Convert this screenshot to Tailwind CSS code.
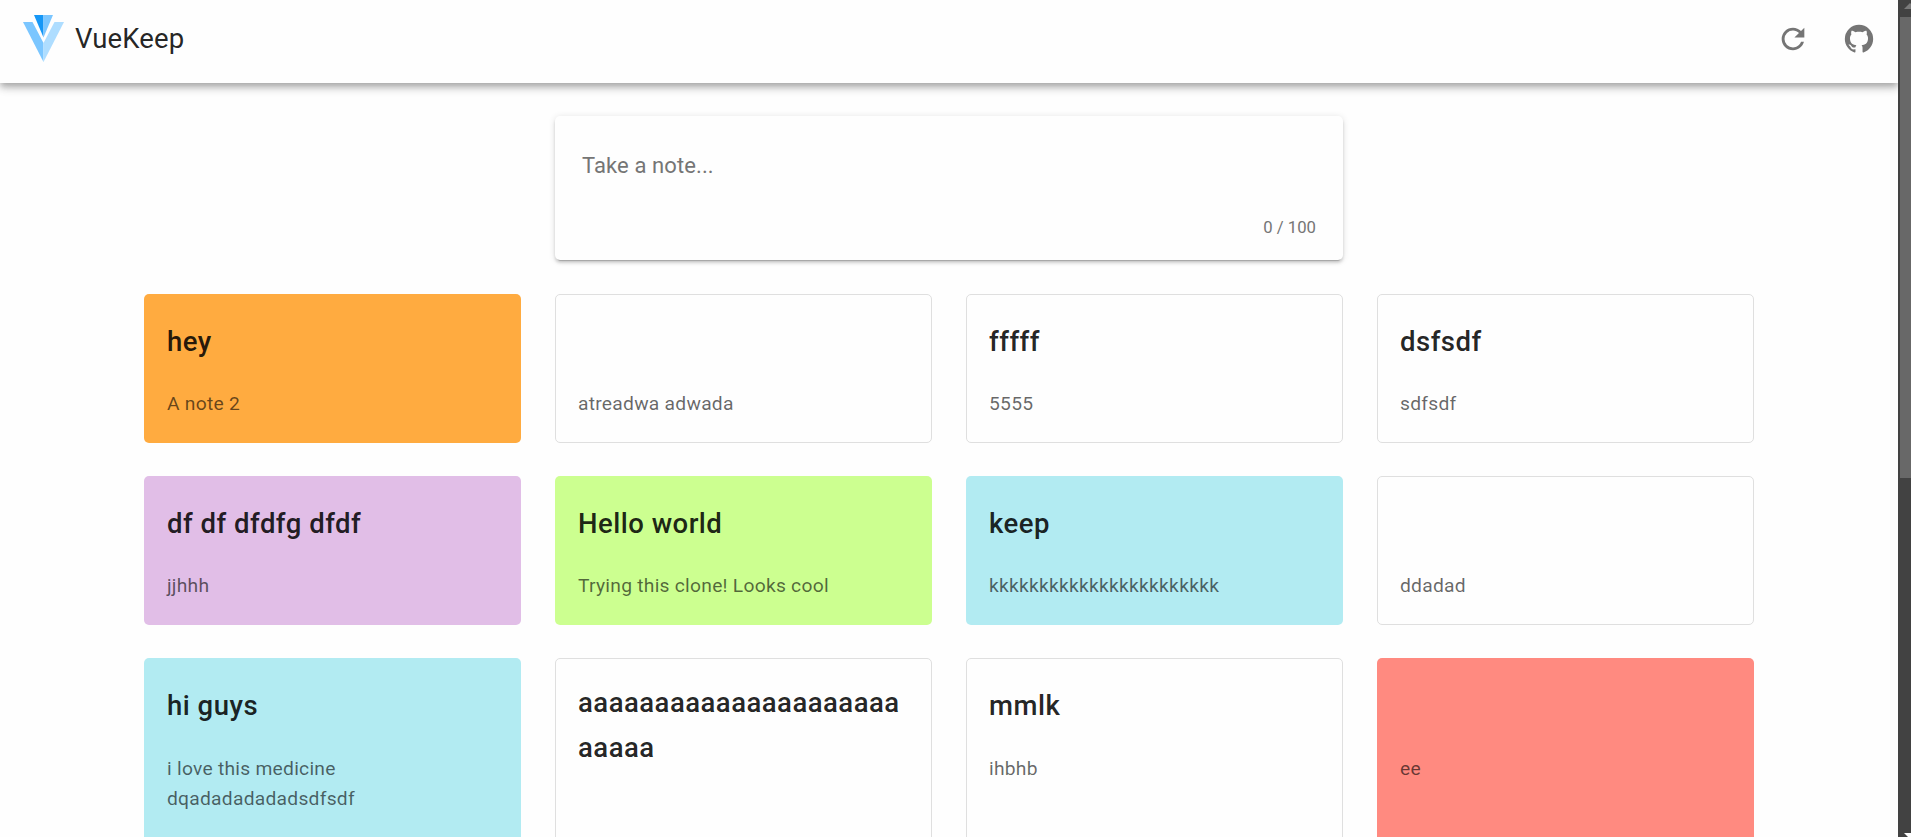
<!DOCTYPE html>
<html lang="en">
<head>
<meta charset="utf-8">
<title>VueKeep</title>
<script src="https://cdn.jsdelivr.net/npm/@tailwindcss/browser@4"></script>
</head>
<body class="flex h-[837px] w-[1911px] overflow-hidden bg-[#fefefe] font-['Roboto',sans-serif] text-black/87">
<div class="min-w-0 flex-1 overflow-hidden">
  <header class="flex h-[83px] items-start justify-between bg-[#fefefe] shadow-[0_3px_6px_-1px_rgba(0,0,0,0.2),0_6px_7px_0_rgba(0,0,0,0.14),0_1px_14px_0_rgba(0,0,0,0.12)]">
    <div class="flex h-[77px] items-center pl-[23px]">
      <svg class="h-[47px] w-[41px]" viewBox="0 0 41 47">
        <path fill="#1697f6" d="M11 0H20.5V22.5Z"/><path fill="#7bc6ff" d="M20.5 0H30L20.5 22.5Z"/>
        <path fill="#7bc6ff" d="M0 7H9.5L20.5 28V47Z"/><path fill="#aeddff" d="M41 7H31.5L20.5 28V47Z"/>
      </svg>
      <h1 class="pl-[11px] text-[27.5px] leading-[41px] tracking-[0.12px]">VueKeep</h1>
    </div>
    <div class="flex h-[77px] items-center gap-[32px] pr-[22px] text-[#757575]">
      <svg class="size-[34px]" viewBox="0 0 24 24" fill="currentColor"><path d="M17.65,6.35C16.2,4.9 14.21,4 12,4A8,8 0 0,0 4,12A8,8 0 0,0 12,20C15.73,20 18.84,17.45 19.73,14H17.65C16.83,16.33 14.61,18 12,18A6,6 0 0,1 6,12A6,6 0 0,1 12,6C13.66,6 15.14,6.69 16.22,7.78L13,11H20V4L17.65,6.35Z"/></svg>
      <svg class="size-[34px]" viewBox="0 0 24 24" fill="currentColor"><path d="M12,2A10,10 0 0,0 2,12C2,16.42 4.87,20.17 8.84,21.5C9.34,21.58 9.5,21.27 9.5,21C9.5,20.77 9.5,20.14 9.5,19.31C6.73,19.91 6.14,17.97 6.14,17.97C5.68,16.81 5.03,16.5 5.03,16.5C4.12,15.88 5.1,15.9 5.1,15.9C6.1,15.97 6.63,16.93 6.63,16.93C7.5,18.45 8.97,18 9.54,17.76C9.63,17.11 9.89,16.67 10.17,16.42C7.95,16.17 5.62,15.31 5.62,11.5C5.62,10.39 6,9.5 6.65,8.79C6.55,8.54 6.2,7.5 6.75,6.15C6.75,6.15 7.59,5.88 9.5,7.17C10.29,6.95 11.15,6.84 12,6.84C12.85,6.84 13.71,6.95 14.5,7.17C16.41,5.88 17.25,6.15 17.25,6.15C17.8,7.5 17.45,8.54 17.35,8.79C18,9.5 18.38,10.39 18.38,11.5C18.38,15.32 16.04,16.16 13.81,16.41C14.17,16.72 14.5,17.33 14.5,18.26C14.5,19.6 14.5,20.68 14.5,21C14.5,21.27 14.66,21.59 15.17,21.5C19.14,20.16 22,16.42 22,12A10,10 0 0,0 12,2Z"/></svg>
    </div>
  </header>
  <main class="px-[144px] pt-[33px]">
    <section class="mx-auto flex h-[144px] w-[788px] flex-col justify-between rounded-[5px] bg-[#fefefe] px-[27px] pt-[33px] pb-[21px] text-[#757575] shadow-[0_4px_1px_-3px_rgba(0,0,0,0.2),0_3px_3px_0_rgba(0,0,0,0.14),0_1px_7px_0_rgba(0,0,0,0.12)]">
      <p class="text-[22px] leading-[33px] tracking-[0.1px]">Take a note...</p>
      <p class="text-right text-[16.7px] leading-[22px]">0 / 100</p>
    </section>
    <section class="mt-[34px] grid grid-cols-4 gap-x-[34px] gap-y-[33px] text-[27.5px] leading-[45px] font-medium tracking-[0.49px]">
      <article class="h-[149px] rounded-[5px] bg-[#ffab40] px-[23px] pt-[25px]"><h2 class="h-[45px]">hey</h2><p class="pt-[25px] text-[19.25px] leading-[30px] font-normal tracking-[0.25px] text-black/60">A note 2</p></article>
      <article class="h-[149px] rounded-[5px] border border-[#dfdfdf] px-[22px] pt-[24px]"><h2 class="h-[45px]"></h2><p class="pt-[25px] text-[19.25px] leading-[30px] font-normal tracking-[0.25px] text-black/60">atreadwa adwada</p></article>
      <article class="h-[149px] rounded-[5px] border border-[#dfdfdf] px-[22px] pt-[24px]"><h2 class="h-[45px]">fffff</h2><p class="pt-[25px] text-[19.25px] leading-[30px] font-normal tracking-[0.25px] text-black/60">5555</p></article>
      <article class="h-[149px] rounded-[5px] border border-[#dfdfdf] px-[22px] pt-[24px]"><h2 class="h-[45px]">dsfsdf</h2><p class="pt-[25px] text-[19.25px] leading-[30px] font-normal tracking-[0.25px] text-black/60">sdfsdf</p></article>
      <article class="h-[149px] rounded-[5px] bg-[#e1bee7] px-[23px] pt-[25px]"><h2 class="h-[45px]">df df dfdfg dfdf</h2><p class="pt-[25px] text-[19.25px] leading-[30px] font-normal tracking-[0.25px] text-black/60">jjhhh</p></article>
      <article class="h-[149px] rounded-[5px] bg-[#ccff90] px-[23px] pt-[25px]"><h2 class="h-[45px]">Hello world</h2><p class="pt-[25px] text-[19.25px] leading-[30px] font-normal tracking-[0.25px] text-black/60">Trying this clone! Looks cool</p></article>
      <article class="h-[149px] rounded-[5px] bg-[#b2ebf2] px-[23px] pt-[25px]"><h2 class="h-[45px]">keep</h2><p class="pt-[25px] text-[19.25px] leading-[30px] font-normal tracking-[0.25px] text-black/60">kkkkkkkkkkkkkkkkkkkkkkk</p></article>
      <article class="h-[149px] rounded-[5px] border border-[#dfdfdf] px-[22px] pt-[24px]"><h2 class="h-[45px]"></h2><p class="pt-[25px] text-[19.25px] leading-[30px] font-normal tracking-[0.25px] text-black/60">ddadad</p></article>
      <article class="h-[240px] rounded-[5px] bg-[#b2ebf2] px-[23px] pt-[25px]"><h2 class="h-[45px]">hi guys</h2><p class="pt-[26px] text-[19.25px] leading-[30px] font-normal tracking-[0.25px] text-black/60">i love this medicine<br>dqadadadadadsdfsdf</p></article>
      <article class="h-[240px] rounded-[5px] border border-[#dfdfdf] px-[22px] pt-[21px]"><h2>aaaaaaaaaaaaaaaaaaaaa<br>aaaaa</h2></article>
      <article class="h-[240px] rounded-[5px] border border-[#dfdfdf] px-[22px] pt-[24px]"><h2 class="h-[45px]">mmlk</h2><p class="pt-[26px] text-[19.25px] leading-[30px] font-normal tracking-[0.25px] text-black/60">ihbhb</p></article>
      <article class="h-[240px] rounded-[5px] bg-[#ff8a80] px-[23px] pt-[25px]"><h2 class="h-[45px]"></h2><p class="pt-[26px] text-[19.25px] leading-[30px] font-normal tracking-[0.25px] text-black/60">ee</p></article>
    </section>
  </main>
</div>
<aside class="flex w-[13px] shrink-0 flex-col items-end bg-[#424242]">
  <svg class="h-[17px] w-[11px] shrink-0" viewBox="0 0 11 17"><path fill="#7a7a7a" d="M4 9L10 3L11 4V9Z"/></svg>
  <div class="h-[461px] w-[11px] shrink-0 bg-[#686868]"></div>
  <svg class="mt-auto h-[4px] w-[11px] shrink-0" viewBox="0 0 11 4"><path fill="#fefefe" d="M4 0H11V4H8Z"/></svg>
</aside>
</body>
</html>
